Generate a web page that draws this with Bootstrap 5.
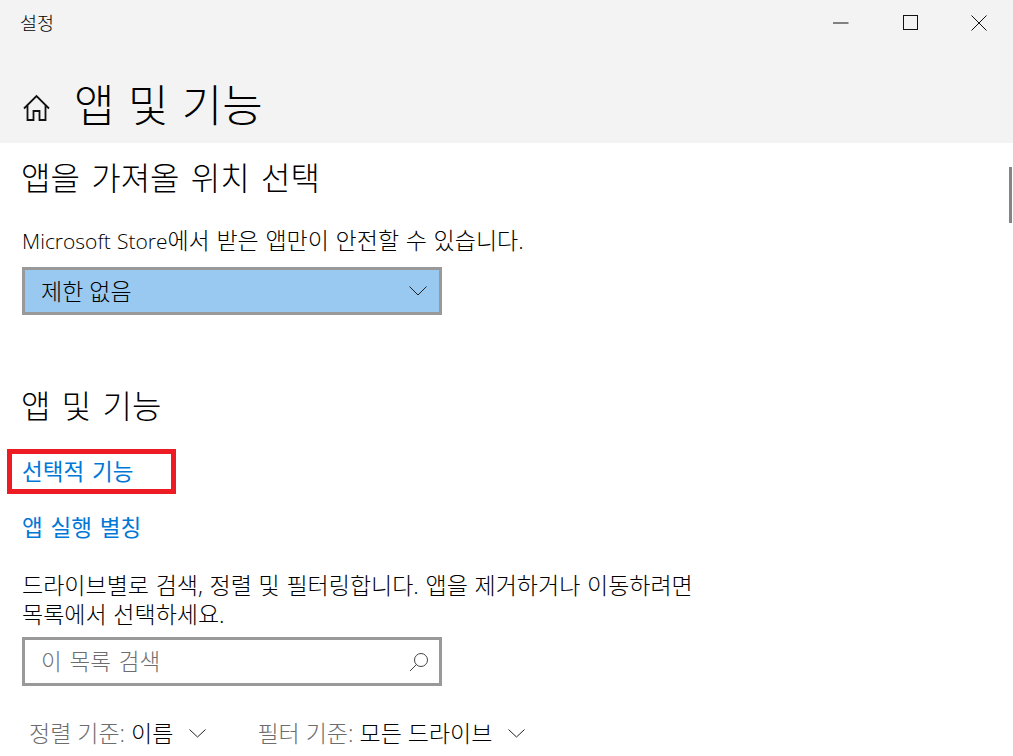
<!DOCTYPE html>
<html lang="ko">
<head>
  <meta charset="UTF-8">
  <meta name="viewport" content="width=device-width, initial-scale=1.0">
  <title>설정</title>
  <link href="https://cdn.jsdelivr.net/npm/bootstrap@5.3.0/dist/css/bootstrap.min.css" rel="stylesheet">
  <style>
    html, body { height: 100%; overflow: hidden; }
    body {
      background: #fff;
      color: #000;
      font-family: "Open Sans", "Noto Sans CJK KR", sans-serif;
      position: relative;
    }
    .app-header { background: #f3f3f3; height: 143px; }
    .title-bar { height: 46px; padding-left: 20px; }
    .title-text { font-size: 18.500px; line-height: 46px; font-weight: 300; }
    .win-btn { width: 69px; height: 46px; }
    .page-title { height: 97px; padding-left: 22px; padding-top: 20px; }
    .page-title h1 { font-size: 44px; font-weight: 300; margin: 0 0 0 23px; word-spacing: 2px; line-height: 60px; }
    .home-icon { margin-top: 6px; }
    .app-body { padding-left: 22px; }
    .section-head { font-size: 32px; font-weight: 300; margin: 0 0 0 -1px; line-height: 42px; word-spacing: 3px; }
    .body-line { font-size: 23px; line-height: 29px; margin: 0; font-weight: 300; word-spacing: .7px; }
    .latin-part { font-size: 21px; }
    .drop-box {
      width: 420px; height: 48px; background: #99c9f0; border: 3px solid #999;
      font-size: 23px; padding: 0 12px 0 16px; margin-top: 11px; font-weight: 300;
    }
    .plain-link { color: #0078d7; font-size: 22.500px; line-height: 28px; text-decoration: none; word-spacing: 2px; }
    .marked-box { width: 169px; height: 45px; margin-left: -15px; border: 5px solid #ed1c24; padding-left: 10px; margin-top: 22px; }
    .search-box {
      width: 420px; height: 49px; border: 3px solid #999; font-size: 22.500px; color: #6d6d6d;
      padding: 0 10px 0 16px; word-spacing: 2px; font-weight: 300;
    }
    .sort-row { font-size: 23px; padding-left: 7px; line-height: 30px; margin-top: 32px; font-weight: 300; }
    .sort-key { color: #6d6d6d; }
    .scroll-thumb { position: absolute; right: 1px; top: 167px; width: 3px; height: 56px; background: #858585; }
  </style>
</head>
<body>
  <div class="app-header">
    <div class="title-bar d-flex justify-content-between">
      <div class="title-text">설정</div>
      <div class="d-flex">
        <div class="win-btn d-flex align-items-center justify-content-center">
          <svg width="16" height="16" viewBox="0 0 16 16"><path d="M0 8h15.500" stroke="#111" fill="none"/></svg>
        </div>
        <div class="win-btn d-flex align-items-center justify-content-center">
          <svg width="16" height="16" viewBox="0 0 16 16"><rect x="1.500" y=".5" width="14" height="14" stroke="#111" fill="none"/></svg>
        </div>
        <div class="win-btn d-flex align-items-center justify-content-center">
          <svg width="16" height="16" viewBox="0 0 16 16"><path d="M.5.500l15 15M15.500.500l-15 15" stroke="#111" fill="none"/></svg>
        </div>
      </div>
    </div>
    <div class="page-title d-flex align-items-center">
      <svg class="home-icon" width="29" height="29" viewBox="0 0 29 29"><path d="M2 15.500L14.500 3 27 15.500M5.500 12.500V27H11.500V18H17.500V27H23.500V12.500" stroke="#111" stroke-width="1.800" fill="none"/></svg>
      <h1>앱 및 기능</h1>
    </div>
  </div>
  <div class="app-body">
    <h2 class="section-head" style="margin-top:14px">앱을 가져올 위치 선택</h2>
    <p class="body-line" style="margin-top:27px"><span class="latin-part">Microsoft Store</span>에서 받은 앱만이 안전할 수 있습니다.</p>
    <div class="drop-box d-flex align-items-center justify-content-between">
      <span>제한 없음</span>
      <svg width="18" height="10" viewBox="0 0 18 10"><path d="M.5.500L9 9 17.500.500" stroke="#222" fill="none"/></svg>
    </div>
    <h2 class="section-head" style="margin-top:70px">앱 및 기능</h2>
    <div class="marked-box d-flex align-items-center">
      <a href="#" class="plain-link">선택적 기능</a>
    </div>
    <a href="#" class="plain-link d-block" style="margin-top:20px">앱 실행 별칭</a>
    <p class="body-line" style="margin-top:29px">드라이브별로 검색, 정렬 및 필터링합니다. 앱을 제거하거나 이동하려면<br>목록에서 선택하세요.</p>
    <div class="search-box d-flex align-items-center justify-content-between mt-2">
      <span>이 목록 검색</span>
      <svg width="20" height="20" viewBox="0 0 20 20"><circle cx="12" cy="8" r="6.500" stroke="#444" fill="none"/><path d="M7.500 12.500L1 19" stroke="#444" fill="none"/></svg>
    </div>
    <div class="sort-row d-flex align-items-center">
      <span class="sort-key">정렬 기준:&nbsp;</span><span>이름</span>
      <svg class="ms-3" width="17" height="9" viewBox="0 0 17 9"><path d="M.5.500L8.500 8 16.500.500" stroke="#222" fill="none"/></svg>
      <span class="sort-key" style="margin-left:51px">필터 기준:&nbsp;</span><span>모든 드라이브</span>
      <svg class="ms-3" width="17" height="9" viewBox="0 0 17 9"><path d="M.5.500L8.500 8 16.500.500" stroke="#222" fill="none"/></svg>
    </div>
  </div>
  <div class="scroll-thumb"></div>
  <script src="https://cdn.jsdelivr.net/npm/bootstrap@5.3.0/dist/js/bootstrap.bundle.min.js"></script>
</body>
</html>
